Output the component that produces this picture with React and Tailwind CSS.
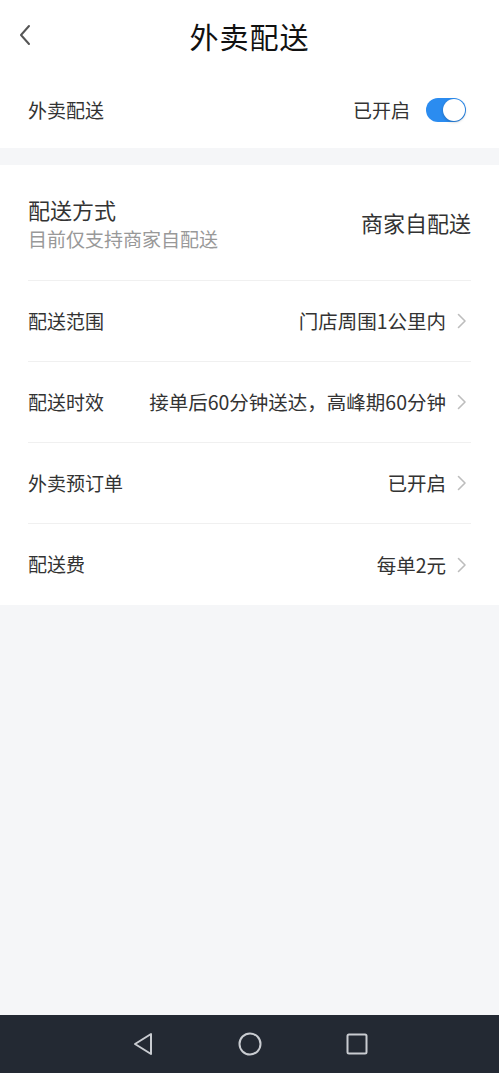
import { useState } from 'react';

const ROWS = [
  { label: '配送范围', value: '门店周围1公里内' },
  { label: '配送时效', value: '接单后60分钟送达，高峰期60分钟' },
  { label: '外卖预订单', value: '已开启' },
  { label: '配送费', value: '每单2元' },
];

function Chevron() {
  return (
    <svg width="10" height="16" viewBox="0 0 10 16" fill="none" className="shrink-0">
      <path d="M1.5 1.5 L8 8 L1.5 14.5" stroke="#bdbdbd" strokeWidth="1.6" strokeLinecap="round" strokeLinejoin="round" />
    </svg>
  );
}

export default function App() {
  const [on, setOn] = useState(true);

  return (
    <div
      className="w-[499px] h-[1073px] flex flex-col bg-[#f5f6f8] text-[#333]"
      style={{ fontFamily: '"Noto Sans CJK SC", "Noto Sans", sans-serif' }}
    >
      {/* header */}
      <div className="relative h-[72px] bg-white flex items-center justify-center">
        <button className="absolute left-[14px] top-[20px] p-1">
          <svg width="14" height="22" viewBox="0 0 14 22" fill="none">
            <path d="M11 2 L3 11 L11 20" stroke="#555" strokeWidth="2" strokeLinecap="round" strokeLinejoin="round" />
          </svg>
        </button>
        <h1 className="text-[29px] leading-none text-[#111] tracking-[1px]">外卖配送</h1>
      </div>

      {/* toggle row */}
      <div className="h-[76px] bg-white flex items-center justify-between pl-[28px] pr-[33px]">
        <span className="text-[19px]">外卖配送</span>
        <div className="flex items-center gap-[16px]">
          <span className="text-[19px]">{on ? '已开启' : '已关闭'}</span>
          <button
            onClick={() => setOn(!on)}
            className={`relative w-[40px] h-[24px] rounded-full ${on ? 'bg-[#2b8cf0]' : 'bg-[#ccc]'}`}
          >
            <span
              className={`absolute top-[1px] w-[22px] h-[22px] rounded-full bg-white shadow-[0_1px_3px_rgba(0,0,0,0.25)] ${on ? 'right-[1px]' : 'left-[1px]'}`}
            />
          </button>
        </div>
      </div>

      <div className="h-[17px]" />

      {/* settings list */}
      <div className="bg-white pl-[28px] pr-[28px]">
        <div className="h-[116px] flex items-center justify-between border-b border-[#f0f0f0]">
          <div className="flex flex-col gap-[4px]">
            <span className="text-[22px] leading-[28px]">配送方式</span>
            <span className="text-[19px] leading-[24px] text-[#999]">目前仅支持商家自配送</span>
          </div>
          <span className="text-[22px]">商家自配送</span>
        </div>
        {ROWS.map((row, i) => (
          <div
            key={row.label}
            className={`h-[81px] flex items-center justify-between ${i < ROWS.length - 1 ? 'border-b border-[#f0f0f0]' : ''}`}
          >
            <span className="text-[19px]">{row.label}</span>
            <div className="flex items-center gap-[11px] pr-[4px]">
              <span className="text-[19.5px]">{row.value}</span>
              <Chevron />
            </div>
          </div>
        ))}
      </div>

      <div className="flex-1" />

      {/* system nav bar */}
      <div className="h-[58px] bg-[#232933] flex items-center justify-center gap-[84px]">
        <svg width="22" height="24" viewBox="0 0 22 24" fill="none">
          <path d="M19 2 L19 22 L3 12 Z" stroke="#c9ccd1" strokeWidth="2" strokeLinejoin="round" />
        </svg>
        <svg width="24" height="24" viewBox="0 0 24 24" fill="none">
          <circle cx="12" cy="12" r="10.5" stroke="#c9ccd1" strokeWidth="2" />
        </svg>
        <svg width="22" height="22" viewBox="0 0 22 22" fill="none">
          <rect x="1.5" y="1.5" width="19" height="19" rx="1.5" stroke="#c9ccd1" strokeWidth="2" />
        </svg>
      </div>
    </div>
  );
}
